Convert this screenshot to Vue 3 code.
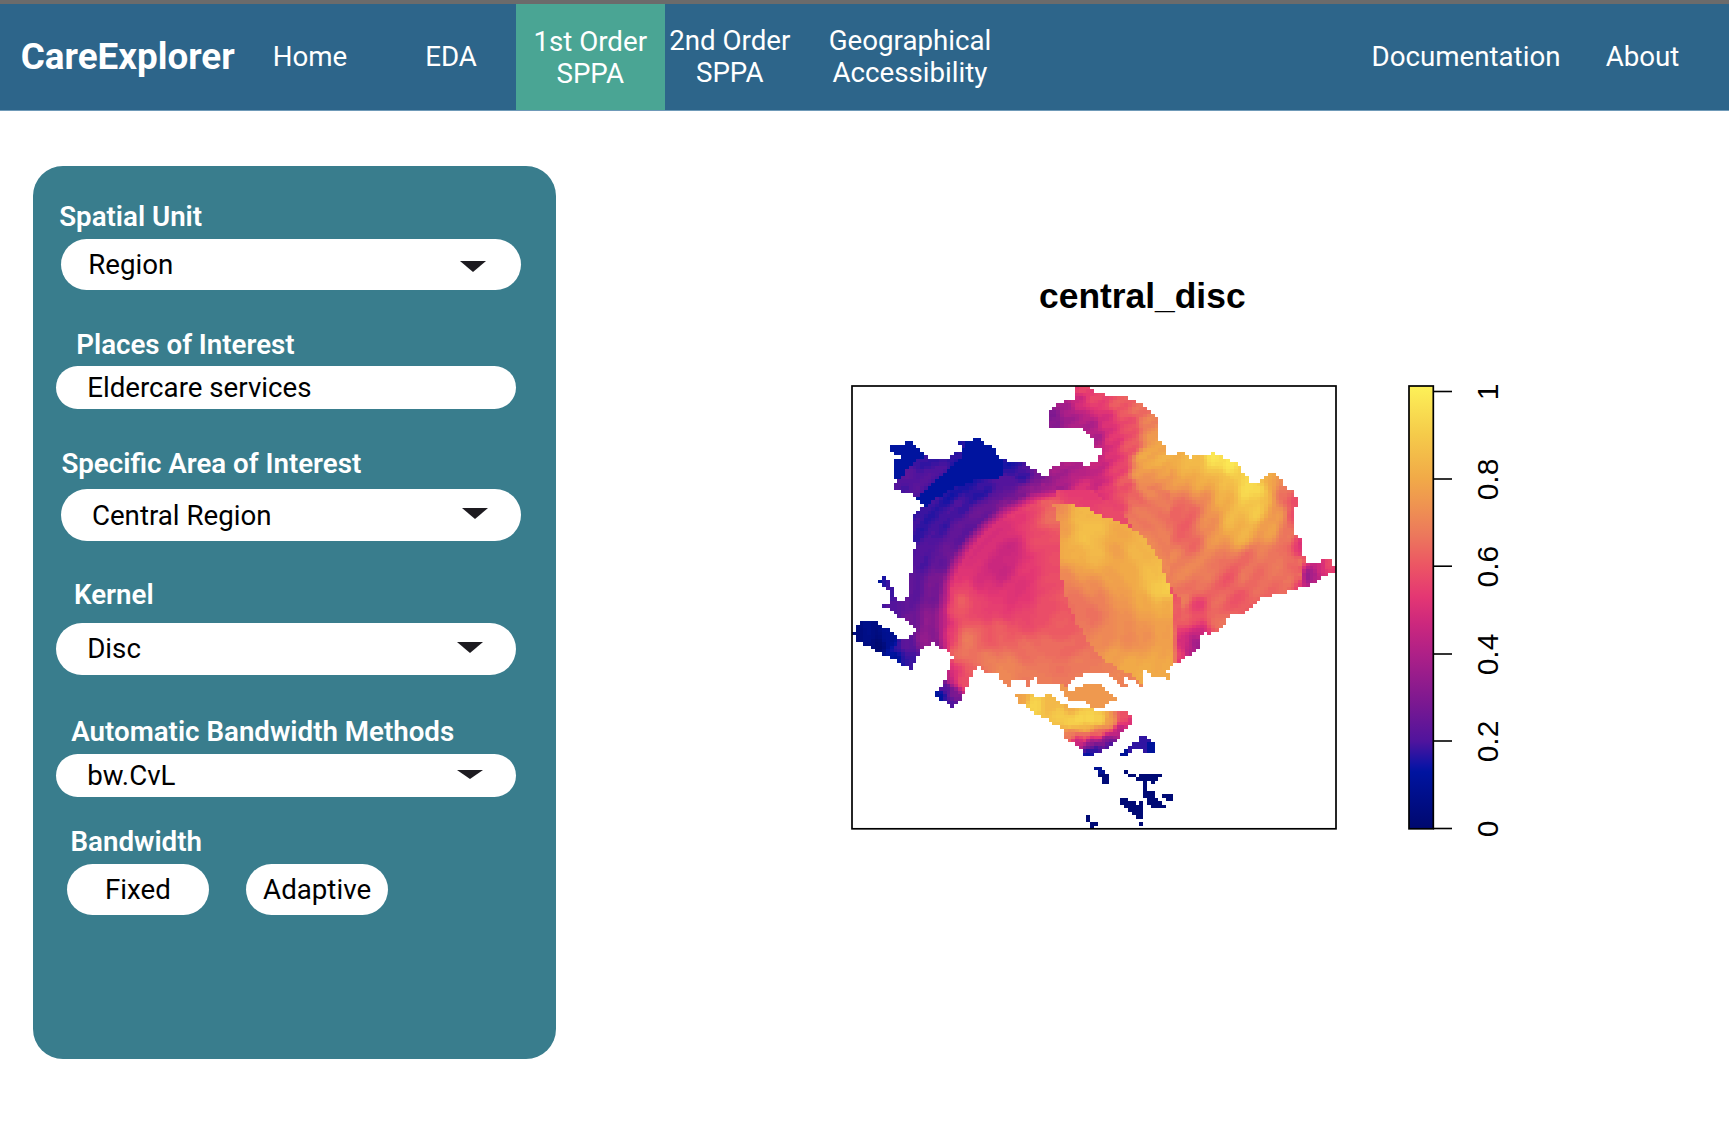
<script setup>
const fields = [
  { key: 'unit', label: 'Spatial Unit', value: 'Region', arrow: true },
  { key: 'places', label: 'Places of Interest', value: 'Eldercare services', arrow: false },
  { key: 'area', label: 'Specific Area of Interest', value: 'Central Region', arrow: true },
  { key: 'kernel', label: 'Kernel', value: 'Disc', arrow: true },
  { key: 'method', label: 'Automatic Bandwidth Methods', value: 'bw.CvL', arrow: true },
]

// Colour ramp shared by the map and the legend: [value, r, g, b]
const ramp = [
  [0, 0, 8, 110], [0.13, 0, 20, 160], [0.145, 15, 20, 165], [0.2, 80, 20, 157], [0.285, 122, 24, 145],
  [0.4, 175, 32, 135], [0.47, 205, 40, 125], [0.53, 228, 55, 115], [0.6, 236, 85, 100],
  [0.67, 236, 120, 92], [0.745, 239, 150, 80], [0.8, 241, 170, 72], [0.9, 245, 203, 74], [1.01, 253, 241, 88],
]
function colour(v) {
  v = Math.max(0, Math.min(1.01, v))
  let i = 1
  while (i < ramp.length - 1 && v > ramp[i][0]) i++
  const a = ramp[i - 1]
  const b = ramp[i]
  const t = (v - a[0]) / (b[0] - a[0])
  return `rgb(${[1, 2, 3].map((k) => Math.round(a[k] + (b[k] - a[k]) * t)).join(',')})`
}
const stops = ramp.map((r) => ({ at: r[0] / 1.01, c: colour(r[0]) }))

const nums = (s) => s.trim().split(/\s+/).map((p) => p.split(',').map(Number))

const mainland = nums(`1076,386 1090,386 1090,389 1098,393 1110,396 1128,398 1140,403 1152,413 1159,422 1159,438 1166,448
1167,455 1177,455 1181,452 1190,458 1197,456 1212,455 1214,452 1223,457 1237,463 1245,473 1250,483 1258,482 1265,476 1272,473
1280,479 1287,487 1295,493 1299,501 1296,507 1296,535 1303,542 1303,556 1307,562 1322,562 1323,559 1333,560 1335,572 1323,577
1315,583 1303,587 1292,590 1280,594 1262,597 1253,606 1242,614 1231,615 1223,628 1212,632 1210,635 1208,632 1202,632 1201,645
1185,659 1173,665 1168,671 1163,677 1153,677 1147,670 1144,672 1144,683 1143,689 1137,685 1132,679 1123,678 1128,685 1122,687
1117,682 1110,675 1090,673 1085,674 1073,680 1066,687 1062,684 1040,683 1035,678 1023,680 1013,680 1010,687 1000,678 998,674
984,673 979,667 973,670 969,682 962,697 953,707 947,702 933,697 937,692 947,675 951,663 954,657 947,652 940,647 932,643 920,650
916,662 910,669 900,663 880,653 858,641 853,633 857,626 862,622 875,622 890,630 898,638 908,638 916,628 908,622 897,615 883,605
887,607 890,594 882,585 876,582 883,577 890,583 893,592 898,600 904,600 909,592 909,573 913,570 913,550 917,547 913,537 913,515
920,508 924,505 917,498 907,493 894,489 897,480 894,478 894,458 901,457 890,450 890,445 905,445 907,442 912,443 920,450 927,458
947,458 955,453 961,450 959,443 969,440 980,439 992,447 1003,460 1025,463 1042,475 1048,475 1050,468 1061,463 1083,463 1088,466
1090,465 1095,462 1102,453 1102,448 1095,447 1093,438 1080,428 1063,429 1049,427 1049,413 1057,403 1075,399`)

const harbour = nums('1061,682 1066,682 1066,689 1073,689 1087,683 1102,684 1110,692 1117,699 1103,707 1090,707 1088,703 1068,700 1062,693')
const south = nums(`1016,695 1028,694 1038,697 1050,694 1058,700 1068,707 1090,708 1100,712 1113,713 1126,713 1133,715 1133,722
1127,728 1118,738 1108,750 1095,753 1090,757 1085,756 1083,750 1075,743 1066,740 1064,728 1053,723 1043,718 1033,713 1020,703`)
const spur = [nums('1026,680 1030,680 1030,687 1026,687'), nums('1167,673 1171,673 1171,680 1167,680')]
const islets = [
  nums('1121,753 1125,752 1133,743 1140,743 1141,737 1148,737 1152,740 1156,747 1152,753 1144,753 1143,748 1132,751 1127,756 1121,756'),
  nums('1095,767 1102,767 1109,774 1109,783 1103,783 1099,777 1097,771'),
  nums(`1125,771 1129,773 1137,776 1140,773 1162,773 1158,781 1153,783 1148,782 1148,792 1155,792 1157,800 1166,807 1158,811
1147,802 1141,793 1144,790 1144,783 1137,780 1129,777`),
  nums('1163,794 1174,794 1174,801 1167,801 1163,797'),
  nums('1121,798 1128,799 1137,804 1140,801 1144,807 1141,820 1137,820 1129,812 1121,804'),
  nums('1140,822 1144,822 1144,826 1140,826'),
  nums('1087,815 1091,815 1091,822 1087,822'),
  nums('1091,822 1098,822 1098,825 1094,828 1091,828'),
]

const discEdge = nums('1055,489 1055,700 1100,700 1175,690 1180,600 1120,510 1090,490')
const coreEdge = nums(`1054,505 1060,530 1061,575 1066,600 1075,620 1090,645 1105,660 1130,675 1150,690 1175,690 1174,640 1172,595
1160,560 1145,538 1127,525 1100,515 1085,507 1060,503`)
const lowBands = [
  nums('925,506 917,498 932,486 945,472 962,456 966,436 985,436 1003,458 1001,478 975,481 955,488 940,496'),
  nums('885,440 912,438 926,456 912,462 902,476 896,482 890,480'),
]

const baseSamples = nums(`900,485,.2 925,475,.21 912,480,.22 920,462,.17 940,470,.19 955,460,.16 960,475,.17
925,512,.17 935,485,.19 950,495,.16 970,490,.16 985,486,.17 1010,468,.16 1022,475,.18 1040,480,.28 1060,475,.38 1080,470,.4
1010,485,.22 1025,495,.29 1045,485,.36 1000,495,.22 960,505,.19 940,520,.18 920,530,.18 920,560,.2 940,560,.22 960,530,.23
980,515,.25 1005,505,.32 1030,497,.38 950,560,.28 945,580,.3 915,590,.23 935,590,.28 900,605,.22 885,582,.17 890,590,.18 878,582,.1 915,620,.27
930,620,.33 925,640,.33
905,645,.22 905,660,.17 898,650,.19 889,640,.08 870,630,.06 860,635,.05 880,645,.02 895,657,.1 940,695,.12 945,688,.2 955,695,.3
952,680,.45 963,680,.58 970,675,.6 950,703,.18 1055,418,.3 1065,410,.38 1080,400,.48 1085,390,.56 1095,400,.56 1070,425,.38 1090,425,.4
1095,440,.4 1105,420,.5 1120,405,.61 1140,410,.65 1150,425,.7 1157,440,.78 1130,425,.58 1115,440,.52 1100,460,.45 1110,455,.5
1095,480,.45 1130,445,.6 1120,465,.55 1085,485,.5 1105,490,.52 1120,505,.57 1125,485,.6 1145,460,.8 1140,475,.75 1160,460,.82
1180,462,.83 1200,465,.86 1215,458,.98 1230,465,.98 1240,475,.92 1250,490,.94 1258,490,.98 1255,510,.9 1225,480,.84 1200,480,.8
1170,480,.76 1150,490,.7 1135,500,.64 1165,500,.67 1190,510,.62 1180,520,.61 1205,500,.72 1225,500,.82 1230,520,.84 1210,520,.72
1190,540,.62 1160,520,.67 1135,515,.68 1155,540,.7 1170,560,.7 1215,540,.75 1240,535,.83 1265,500,.84 1272,485,.76 1283,495,.66
1290,500,.57 1292,515,.58 1280,515,.76 1270,530,.78 1285,535,.68 1295,560,.68 1300,550,.54 1303,545,.52 1307,575,.35 1312,575,.4
1320,568,.48 1330,565,.56 1298,575,.66 1285,575,.68 1265,555,.68 1250,560,.64 1245,580,.66 1225,565,.63 1230,580,.6 1215,555,.7
1200,570,.7 1205,590,.65 1215,600,.64 1240,600,.6 1265,585,.64 1185,570,.7 1200,605,.54 1195,620,.57 1215,620,.67 1200,632,.48
1197,643,.32 1190,650,.4 1183,640,.52 1178,655,.57 1185,615,.65 1180,600,.68`)
const discSamples = nums(`1000,530,.5 980,545,.5 970,555,.5 960,575,.52 1020,515,.53 1035,508,.56 1045,500,.62 1050,515,.66 1010,550,.46
1000,570,.45 980,580,.49 1030,570,.53 1040,540,.58 1020,590,.51 965,590,.56 955,610,.6 945,600,.46 942,620,.46 947,640,.54 960,600,.64
970,640,.69 960,655,.67 985,610,.55 985,640,.6 985,660,.69 1000,630,.62 1005,670,.71 1030,620,.57 1030,650,.65 1050,600,.58 1060,630,.61
1050,650,.65 1040,672,.68 1070,650,.64 1080,665,.68 1065,600,.61 1120,680,.7 955,672,.5 963,680,.58 970,672,.62
1070,492,.54 1090,498,.54 1110,508,.57 1060,560,.58 1010,600,.52 1005,610,.54 1050,575,.58`)
const coreSamples = nums(`1055,506,.7 1060,515,.74 1062,530,.77 1080,515,.85 1085,535,.88 1100,530,.86 1075,550,.82 1095,555,.85 1115,535,.79
1118,550,.77 1135,550,.84 1150,575,.86 1165,590,.92 1155,590,.89 1130,575,.8 1115,580,.78 1080,570,.79 1070,580,.69 1090,590,.72
1085,610,.66 1075,600,.65 1100,600,.68 1095,615,.65 1115,600,.74 1120,590,.77 1145,600,.79 1165,605,.8 1160,630,.77 1145,635,.73
1130,640,.71 1105,640,.71 1115,655,.77 1130,665,.8 1140,672,.81 1160,665,.8 1165,650,.78 1120,620,.72`)
const southSamples = nums(`1020,700,.78 1035,705,.93 1050,705,.84 1060,715,.9 1080,720,.94 1090,719,.94 1100,720,.92 1070,722,.92 1085,728,.84
1070,735,.68 1085,737,.62 1100,733,.65 1110,722,.77 1125,718,.6 1130,722,.5 1120,730,.42 1105,740,.3 1090,744,.32 1078,742,.45
1095,750,.16 1088,754,.12 1110,746,.18 1070,708,.8`)

function inside(poly, x, y) {
  let hit = false
  for (let i = 0, j = poly.length - 1; i < poly.length; j = i++) {
    const [xi, yi] = poly[i]
    const [xj, yj] = poly[j]
    if (yi > y !== yj > y && x < ((xj - xi) * (y - yi)) / (yj - yi) + xi) hit = !hit
  }
  return hit
}
function blend(samples, x, y, soft = 50) {
  let sum = 0
  let weight = 0
  for (const [sx, sy, v] of samples) {
    const d = (sx - x) ** 2 + (sy - y) ** 2 + soft
    const w = 1 / (d * d)
    sum += w * v
    weight += w
  }
  return sum / weight
}
// Faint overlapping kernel rims
function rim(x, y) {
  if (x > 1170) return 0.016 * Math.sin(Math.hypot(x - 1060, y - 420) / 3.4)
  if (y < 490 && x > 1045) return 0.016 * Math.sin((y + 0.55 * x) / 2.6)
  return 0.012 * Math.sin(Math.hypot(x - 1060, y - 620) / 3)
}
// Share of the large western disc at a point: 1 well inside, 0 outside
function discShare(x, y) {
  if (x >= 1055) return inside(discEdge, x, y) ? 1 : 0
  const reach = Math.hypot((x - 1075) * 0.96, y - 620)
  return Math.max(0, Math.min(1, (134 - reach) / 12))
}
function intensity(x, y) {
  if (inside(mainland, x, y) || spur.some((p) => inside(p, x, y))) {
    if (lowBands.some((p) => inside(p, x, y))) return 0.125
    if (inside(coreEdge, x, y)) return blend(coreSamples, x, y, 70) + rim(x, y) * 0.5
    const share = discShare(x, y)
    const outer = blend(baseSamples, x, y, x > 1150 && x < 1300 ? 60 : 15) + rim(x, y)
    const inner = blend(discSamples, x, y, 80) + rim(x, y) * 0.5
    return outer + (inner - outer) * share
  }
  if (inside(harbour, x, y)) return 0.75
  if (inside(south, x, y)) return blend(southSamples, x, y, 20)
  const n = islets.findIndex((p) => inside(p, x, y))
  if (n === 0) return x > 1148 && y > 743 ? 0.12 : x < 1129 ? 0.11 : 0.175
  if (n === 1) return y < 774 ? 0.1 : 0.03
  return n > 0 ? 0.02 : null
}

const left = 852
const top = 386
const cw = 484 / 128
const ch = 443 / 128
const layers = new Map()
for (let r = 0; r < 128; r++) {
  for (let c = 0; c < 128; c++) {
    const x = left + (c + 0.5) * cw
    const y = top + (r + 0.5) * ch
    const v = intensity(x, y)
    if (v === null) continue
    const level = Math.round(v * 110)
    layers.set(level, (layers.get(level) || '') + `M${c} ${r}h1v1h-1z`)
  }
}
const cells = [...layers].map(([level, d]) => ({ d, fill: colour(level / 110) }))

const ticks = [
  { t: '1', y: 391.5 }, { t: '0.8', y: 479 }, { t: '0.6', y: 566.2 },
  { t: '0.4', y: 654 }, { t: '0.2', y: 741 }, { t: '0', y: 828.5 },
]
</script>

<template>
  <div class="page">
    <header class="nav">
      <div class="brand">CareExplorer</div>
      <a class="item home">Home</a>
      <a class="item eda">EDA</a>
      <a class="item first">1st Order<br />SPPA</a>
      <a class="item second">2nd Order<br />SPPA</a>
      <a class="item geo">Geographical<br />Accessibility</a>
      <a class="item docs">Documentation</a>
      <a class="item about">About</a>
    </header>

    <main class="content">
      <aside class="panel">
        <section v-for="f in fields" :key="f.key" class="field" :class="f.key">
          <div class="label">{{ f.label }}</div>
          <div class="pill">
            <span>{{ f.value }}</span>
            <svg v-if="f.arrow" class="arrow" viewBox="0 0 26 11" preserveAspectRatio="none">
              <path d="M0 0H26L13 11Z" fill="#1d1b20" />
            </svg>
          </div>
        </section>
        <section class="field bandwidth">
          <div class="label">Bandwidth</div>
          <div class="buttons">
            <button type="button">Fixed</button>
            <button type="button">Adaptive</button>
          </div>
        </section>
      </aside>

      <svg class="plot" viewBox="840 260 680 590" width="680" height="590">
        <defs>
          <linearGradient id="ramp" x1="0" y1="1" x2="0" y2="0">
            <stop v-for="s in stops" :key="s.at" :offset="s.at" :stop-color="s.c" />
          </linearGradient>
        </defs>
        <text class="title" x="1142.3" y="307.7" text-anchor="middle">central_disc</text>
        <g :transform="`translate(${left} ${top}) scale(${cw} ${ch})`" shape-rendering="crispEdges">
          <path v-for="(c, i) in cells" :key="i" :d="c.d" :fill="c.fill" />
        </g>
        <rect x="852" y="386" width="484" height="442.8" fill="none" stroke="#000" stroke-width="1.7" />
        <rect x="1409" y="386" width="24.3" height="442.8" fill="url(#ramp)" stroke="#000" stroke-width="1.7" />
        <g v-for="k in ticks" :key="k.t">
          <path :d="`M1433 ${k.y}H1452`" stroke="#000" stroke-width="1.6" />
          <text class="tick" text-anchor="middle" :transform="`translate(1498 ${k.y + 0.5}) rotate(-90)`">{{ k.t }}</text>
        </g>
      </svg>
    </main>
  </div>
</template>

<style>
body {
  background: #fff;
}
</style>

<style scoped>
.page {
  width: 1729px;
  height: 1132px;
  overflow: hidden;
  background: #fff;
  font-family: Roboto, "Liberation Sans", sans-serif;
}
.nav {
  box-sizing: border-box;
  display: flex;
  height: 111px;
  padding-right: 36.5px;
  border-top: 4px solid #6b6b6b;
  border-bottom: 1px solid #6f9ab8;
  background: #2d658a;
  color: #fff;
}
.brand {
  box-sizing: border-box;
  display: flex;
  align-items: center;
  width: 250px;
  padding: 0 0 1px 20.8px;
  font-size: 36.8px;
  font-weight: 700;
}
.item {
  box-sizing: border-box;
  display: flex;
  align-items: center;
  justify-content: center;
  font-size: 27.7px;
  line-height: 32.4px;
  text-align: center;
  white-space: nowrap;
}
.home { width: 120px; }
.eda { width: 130px; margin-left: 16px; }
.first { width: 148.5px; padding-top: 2px; background: #4aa594; }
.second { width: 130.5px; }
.geo { width: 180px; margin-left: 25px; }
.docs { width: 200px; margin-left: auto; }
.about { width: 100px; margin-left: 26.5px; }

.content {
  display: flex;
  align-items: flex-start;
  padding: 55px 0 0 33.4px;
}
.panel {
  box-sizing: border-box;
  width: 523px;
  height: 892.5px;
  padding-top: 34.5px;
  border-radius: 30px;
  background: #397d8d;
}
.label {
  height: 32px;
  font-size: 27.7px;
  font-weight: 600;
  line-height: 32px;
  color: #fff;
  white-space: nowrap;
}
.pill {
  box-sizing: border-box;
  display: flex;
  align-items: center;
  justify-content: space-between;
  width: 459.7px;
  height: 51.7px;
  margin-left: 22.8px;
  padding: 0 32.4px 0 31px;
  border-radius: 26px;
  background: #fff;
  font-size: 27.7px;
  color: #000;
}
.arrow {
  width: 26px;
  height: 11px;
  margin-bottom: 3px;
}
.unit .label { padding-left: 25.8px; }
.unit .pill { margin: 6px 0 0 27.5px; padding: 0 35px 0 27.3px; }
.unit .arrow { margin: 4px 0 0; }
.places { margin-top: 38.5px; }
.places .label { padding-left: 42.8px; }
.places .pill { height: 42.5px; margin-top: 5.6px; }
.area { margin-top: 39.7px; }
.area .label { padding-left: 28px; }
.area .pill { margin: 9px 0 0 27.5px; padding-right: 33px; }
.kernel { margin-top: 38.3px; }
.kernel .label { padding-left: 40.6px; }
.kernel .pill { margin-top: 11.5px; }
.method { margin-top: 41.7px; }
.method .label { padding-left: 37.9px; }
.method .pill { height: 42.5px; margin-top: 6px; }
.method .arrow { height: 9px; }
.bandwidth { margin-top: 29.3px; }
.bandwidth .label { padding-left: 37.1px; }
.buttons {
  display: flex;
  gap: 37.2px;
  margin: 5.5px 0 0 33.5px;
}
.buttons button {
  width: 142px;
  height: 51.7px;
  padding: 0;
  border: 0;
  border-radius: 26px;
  background: #fff;
  font: 400 27.7px Roboto, "Liberation Sans", sans-serif;
  color: #000;
}

.plot {
  flex: none;
  margin: 94px 0 0 283.6px;
}
.title {
  font: 700 35.4px "Liberation Sans", Arial, sans-serif;
}
.tick {
  font: 400 30px "Liberation Sans", Arial, sans-serif;
}
</style>
